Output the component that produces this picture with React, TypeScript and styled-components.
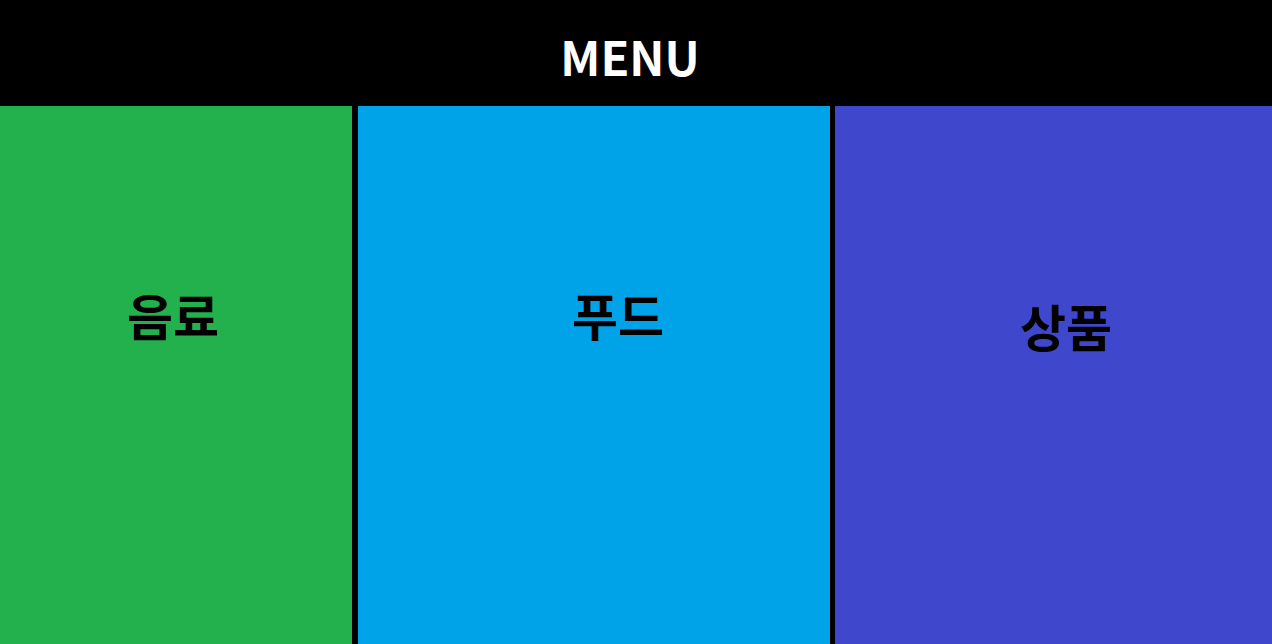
import React from "react";
import styled, { createGlobalStyle } from "styled-components";

const Global = createGlobalStyle`
  html, body { margin: 0; padding: 0; background: #000; }
  body { font-family: "Noto Sans CJK KR", "Noto Sans", sans-serif; }
  #root { width: 1272px; height: 644px; }
`;

const Page = styled.div`
  width: 1272px;
  height: 644px;
  display: flex;
  flex-direction: column;
  background: #000;
  overflow: hidden;
`;

const Header = styled.header`
  height: 106px;
  flex: none;
  display: flex;
  align-items: center;
  justify-content: center;
  background: #000;
`;

const Title = styled.h1`
  margin: 4px 0 0;
  padding-right: 12px;
  color: #fff;
  font-size: 47px;
  font-weight: 700;
  line-height: 1;
`;

const Columns = styled.div`
  flex: 1;
  display: grid;
  grid-template-columns: 352px 478px 442px;
  background: #000;
`;

const Column = styled.section<{ $bg: string; $gapLeft: number; $dx: number; $dy: number }>`
  background: ${(p) => p.$bg};
  margin-left: ${(p) => p.$gapLeft}px;
  display: flex;
  align-items: center;
  justify-content: center;
  padding-left: ${(p) => (p.$dx > 0 ? p.$dx * 2 : 0)}px;
  padding-right: ${(p) => (p.$dx < 0 ? -p.$dx * 2 : 0)}px;
  padding-bottom: ${(p) => -p.$dy * 2}px;
`;

const Label = styled.span`
  color: #000;
  font-size: 50px;
  font-weight: 700;
  line-height: 1;
`;

const items = [
  { name: "음료", bg: "#22B14C", gap: 0, dx: -3, dy: -61 },
  { name: "푸드", bg: "#00A2E8", gap: 6, dx: 24, dy: -61 },
  { name: "상품", bg: "#3F48CC", gap: 5, dx: 12.5, dy: -50 },
];

export default function App() {
  return (
    <>
      <Global />
      <Page>
        <Header>
          <Title>MENU</Title>
        </Header>
        <Columns>
          {items.map((it) => (
            <Column key={it.name} $bg={it.bg} $gapLeft={it.gap} $dx={it.dx} $dy={it.dy}>
              <Label>{it.name}</Label>
            </Column>
          ))}
        </Columns>
      </Page>
    </>
  );
}
